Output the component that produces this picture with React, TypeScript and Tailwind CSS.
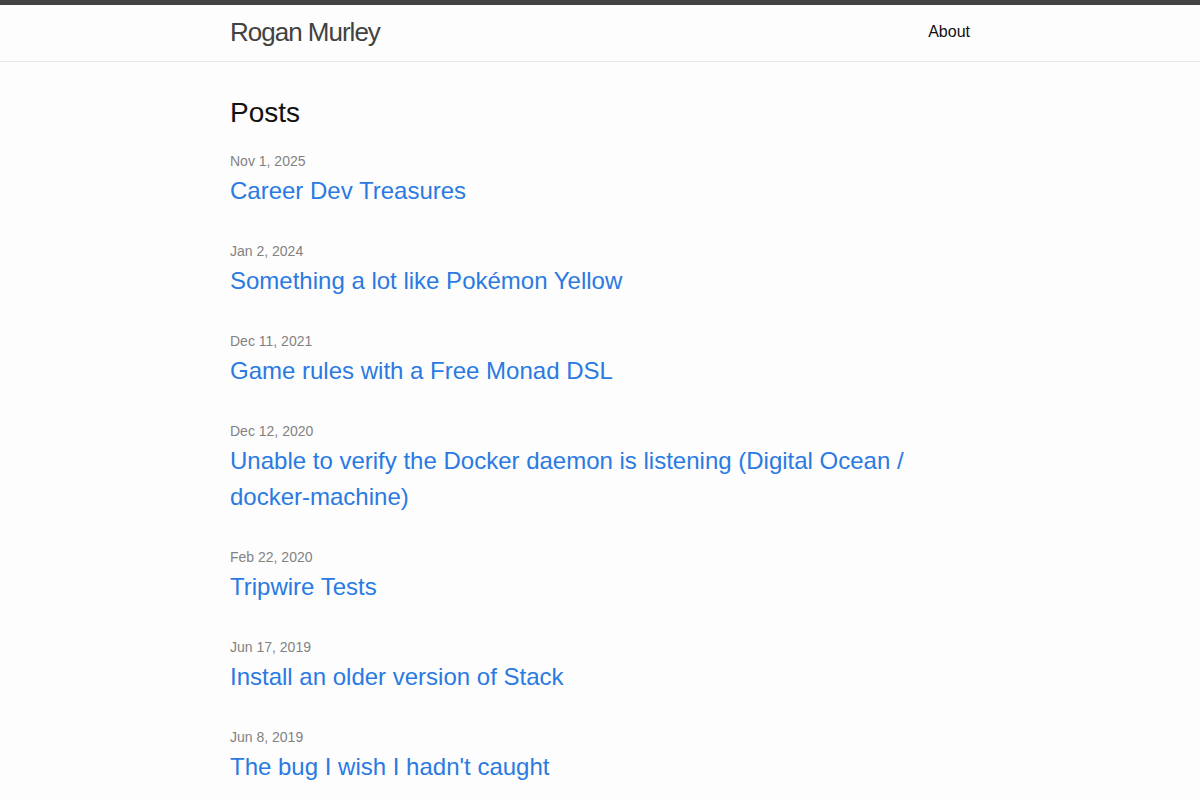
const posts = [
  { date: 'Nov 1, 2025', title: 'Career Dev Treasures' },
  { date: 'Jan 2, 2024', title: 'Something a lot like Pokémon Yellow' },
  { date: 'Dec 11, 2021', title: 'Game rules with a Free Monad DSL' },
  { date: 'Dec 12, 2020', title: 'Unable to verify the Docker daemon is listening (Digital Ocean / docker-machine)' },
  { date: 'Feb 22, 2020', title: 'Tripwire Tests' },
  { date: 'Jun 17, 2019', title: 'Install an older version of Stack' },
  { date: 'Jun 8, 2019', title: "The bug I wish I hadn't caught" }
]

export default function App() {
  return (
    <div className="min-h-screen bg-[#fdfdfd] text-[#111] text-base leading-normal font-['Liberation_Sans',Helvetica,Arial,sans-serif]">
      <header className="border-t-[5px] border-b border-t-[#424242] border-b-[#e8e8e8]">
        <div className="max-w-[800px] min-h-[56px] mx-auto px-[30px] flex justify-between items-start">
          <a href="#" className="text-[26px] leading-[54px] tracking-[-1px] text-[#424242] font-light">
            Rogan Murley
          </a>
          <nav>
            <a href="#" className="leading-[54px] text-[#111]">About</a>
          </nav>
        </div>
      </header>

      <main className="py-[30px]">
        <div className="max-w-[800px] mx-auto px-[30px]">
          <h2 className="text-[28px] leading-normal mb-[15px]">Posts</h2>
          <ul className="mb-[15px]">
            {posts.map((post) => (
              <li key={post.title} className="mb-[30px]">
                <span className="text-sm text-[#828282]">{post.date}</span>
                <h3 className="text-2xl leading-normal">
                  <a href="#" className="text-[#2a7ae2]">{post.title}</a>
                </h3>
              </li>
            ))}
          </ul>
        </div>
      </main>
    </div>
  )
}
